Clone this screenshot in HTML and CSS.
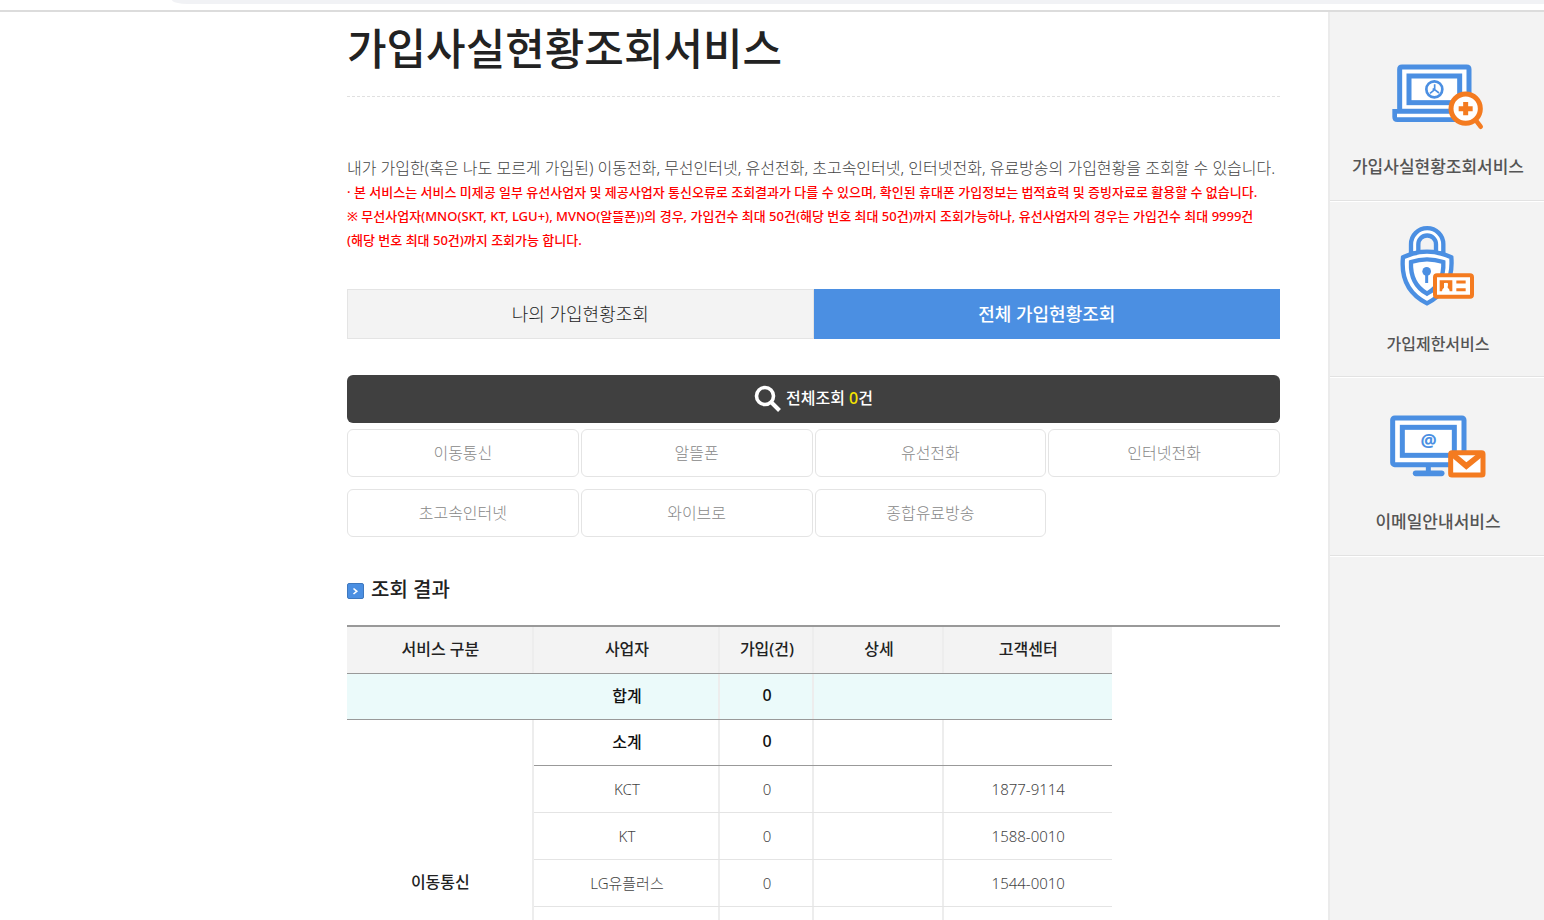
FILE: index.html
```html
<!DOCTYPE html>
<html lang="ko">
<head>
<meta charset="utf-8">
<title>가입사실현황조회서비스</title>
<link rel="stylesheet" href="styles.css">
</head>
<body>
<div class="app">
  <div class="browser-edge"><div class="address-edge"></div></div>
  <div class="page">
    <main class="main">
      <h1 class="title">가입사실현황조회서비스</h1>
      <section class="intro">
        <p class="lead">내가 가입한(혹은 나도 모르게 가입된) 이동전화, 무선인터넷, 유선전화, 초고속인터넷, 인터넷전화, 유료방송의 가입현황을 조회할 수 있습니다.</p>
        <p class="notice">· 본 서비스는 서비스 미제공 일부 유선사업자 및 제공사업자 통신오류로 조회결과가 다를 수 있으며, 확인된 휴대폰 가입정보는 법적효력 및 증빙자료로 활용할 수 없습니다.</p>
        <p class="notice">※ 무선사업자(MNO(SKT, KT, LGU+), MVNO(알뜰폰))의 경우, 가입건수 최대 50건(해당 번호 최대 50건)까지 조회가능하나, 유선사업자의 경우는 가입건수 최대 9999건<br>(해당 번호 최대 50건)까지 조회가능 합니다.</p>
      </section>
      <div class="tabs">
        <button class="tab" type="button">나의 가입현황조회</button>
        <button class="tab tab-active" type="button">전체 가입현황조회</button>
      </div>
      <button class="search" type="button">
        <svg class="search-icon" viewBox="0 0 28 28" aria-hidden="true"><circle cx="11" cy="11" r="8.500" fill="none" stroke="#fff" stroke-width="3.600"/><path d="M17 17l8.500 8.500" stroke="#fff" stroke-width="4"/></svg>
        <span class="search-label">전체조회 <span class="count">0</span>건</span>
      </button>
      <div class="filters">
        <button class="filter" type="button">이동통신</button>
        <button class="filter" type="button">알뜰폰</button>
        <button class="filter" type="button">유선전화</button>
        <button class="filter" type="button">인터넷전화</button>
        <button class="filter" type="button">초고속인터넷</button>
        <button class="filter" type="button">와이브로</button>
        <button class="filter" type="button">종합유료방송</button>
      </div>
      <h2 class="subtitle">
        <svg class="bullet" viewBox="0 0 17 17" aria-hidden="true"><rect x="0.5" y="0.5" width="16" height="15" rx="1.500" fill="#4b8fe2" stroke="#3f78be"/><path d="M6.500 5.500L9.800 8.300 6.500 11" fill="none" stroke="#fff" stroke-width="1.600"/></svg>
        조회 결과
      </h2>
      <div class="results">
        <table class="table">
          <colgroup><col class="col-kind"><col class="col-company"><col class="col-count"><col class="col-detail"><col class="col-phone"></colgroup>
          <thead>
            <tr><th>서비스 구분</th><th>사업자</th><th>가입(건)</th><th>상세</th><th>고객센터</th></tr>
          </thead>
          <tbody>
            <tr class="total"><td class="no-line"></td><td>합계</td><td>0</td><td class="no-line"></td><td></td></tr>
            <tr class="subtotal"><th class="group" rowspan="7" scope="rowgroup">이동통신</th><td>소계</td><td>0</td><td></td><td></td></tr>
            <tr><td>KCT</td><td>0</td><td></td><td>1877-9114</td></tr>
            <tr><td>KT</td><td>0</td><td></td><td>1588-0010</td></tr>
            <tr><td>LG유플러스</td><td>0</td><td></td><td>1544-0010</td></tr>
            <tr><td></td><td></td><td></td><td></td></tr>
            <tr><td></td><td></td><td></td><td></td></tr>
            <tr><td></td><td></td><td></td><td></td></tr>
          </tbody>
        </table>
      </div>
    </main>
    <aside class="side">
      <a class="service service-status" href="#">
        <svg class="service-icon" viewBox="210 65 288 210" aria-hidden="true">
          <g stroke="#4b8fe2" fill="#fff" stroke-width="15">
            <path d="M239 213V87q0-7 7-7h194q7 0 7 7v126z"/>
            <path d="M224 213h224v25H232q-8 0-8-8z" stroke-width="14"/>
            <rect x="267" y="107" width="152" height="80"/>
            <circle cx="343" cy="147" r="24" stroke-width="8"/>
            <path d="M344 132v16l-14 11M344 148l13 10M338 145l6 4" fill="none" stroke-width="5"/>
          </g>
          <path d="M466 238l16 21" stroke="#f47b20" stroke-width="14" stroke-linecap="round"/>
          <circle cx="437" cy="205" r="44" fill="#fff" stroke="#f47b20" stroke-width="15"/>
          <path d="M437 185v40M416 205h42" stroke="#f47b20" stroke-width="15"/>
        </svg>
        <span>가입사실현황조회서비스</span>
      </a>
      <a class="service service-limit" href="#">
        <svg class="service-icon" viewBox="210 70 288 255" aria-hidden="true">
          <g stroke="#4b8fe2" fill="#fff" stroke-width="13">
            <path d="M273 158v-27a48 48 0 0 1 97 0v27z"/>
            <path d="M295 156v-25a26 26 0 0 1 53 0v25z" fill="#f3f3f3"/>
            <path d="M249 170q36-17 72-17t73 17q8 96-73 138q-82-42-72-138z"/>
            <path d="M273 184q24-8 48-8t49 8q3 66-49 95q-51-29-48-95z"/>
            <circle cx="320" cy="212" r="13" fill="#4b8fe2" stroke="none"/>
            <path d="M320 215v32" stroke-width="9"/>
          </g>
          <rect x="345" y="224" width="111" height="64" rx="6" fill="#fff" stroke="#f47b20" stroke-width="12"/>
          <path d="M359 239h38v33h-8q0-8-6-11v-14h-11v14q-6 3-6 11h-7z" fill="#f47b20"/>
          <circle cx="378" cy="252" r="6" fill="#fff"/>
          <path d="M409 244h28M409 267h28" stroke="#f47b20" stroke-width="9"/>
        </svg>
        <span>가입제한서비스</span>
      </a>
      <a class="service service-mail" href="#">
        <svg class="service-icon" viewBox="207 95 288 225" aria-hidden="true">
          <g stroke="#4b8fe2" fill="#fff" stroke-width="15">
            <rect x="215" y="113" width="214" height="140" rx="6"/>
            <rect x="244" y="141" width="156" height="84"/>
            <path d="M322 258v16"/>
            <path d="M284 279h78" stroke-width="17" stroke-linecap="round"/>
          </g>
          <text x="323" y="199" text-anchor="middle" class="at-sign">@</text>
          <rect x="389" y="217" width="97" height="67" rx="4" fill="#fff" stroke="#f47b20" stroke-width="15"/>
          <path d="M392 220l44 37 46-37" fill="none" stroke="#f47b20" stroke-width="17"/>
        </svg>
        <span>이메일안내서비스</span>
      </a>
    </aside>
  </div>
</div>
</body>
</html>
```
FILE: styles.css
```css
* { box-sizing: border-box; }
body {
  margin: 0;
  background: #fff;
  color: #222;
  font-family: "Noto Sans", "Noto Sans CJK KR", sans-serif;
}
button {
  padding: 0 0 3px;
  border: 0;
  font: inherit;
  cursor: pointer;
}
.app {
  display: flex;
  flex-direction: column;
  height: 100vh;
  overflow: hidden;
}
.browser-edge {
  flex: none;
  height: 12px;
  padding-left: 172px;
  border-bottom: 2px solid #dcdcdc;
}
.address-edge {
  height: 4px;
  background: #f1f2f5;
  border-bottom-left-radius: 16px 4px;
}
.page {
  display: flex;
  flex: 1;
  min-height: 0;
}
.main {
  flex: 1;
  min-width: 0;
  padding: 0 48px 0 347px;
}
.title {
  margin: 0;
  padding: 7px 0 17px;
  border-bottom: 1px dashed #e0e0e0;
  font-size: 43px;
  line-height: 60px;
  font-weight: 500;
}
.intro {
  padding: 59px 0 37px;
}
.intro p {
  margin: 0;
  line-height: 24px;
  white-space: nowrap;
}
.lead {
  color: #444;
  font-size: 16px;
  font-weight: 300;
}
.notice {
  color: #f00;
  font-size: 13px;
  font-weight: 500;
}
.tabs {
  display: grid;
  grid-template-columns: 1fr 1fr;
  margin-bottom: 36px;
}
.tab {
  height: 50px;
  background: #f3f3f3;
  border: 1px solid #e4e4e4;
  color: #222;
  font-size: 18px;
  font-weight: 300;
}
.tab-active {
  background: #4b8fe2;
  border-color: #4b8fe2;
  color: #fff;
  font-weight: 500;
}
.search {
  display: flex;
  align-items: center;
  justify-content: center;
  gap: 4px;
  width: 100%;
  height: 48px;
  margin-bottom: 6px;
  padding: 0;
  border-radius: 6px;
  background: #404040;
  color: #fff;
  font-size: 16px;
  font-weight: 500;
}
.search-icon {
  width: 28px;
  height: 28px;
}
.search-label { padding-bottom: 4px; }
.count { color: #f5e400; }
.filters {
  display: grid;
  grid-template-columns: repeat(4, 1fr);
  gap: 12px 2px;
}
.filter {
  height: 48px;
  border: 1px solid #e4e4e4;
  border-radius: 6px;
  background: #fff;
  color: #888;
  font-size: 16px;
  font-weight: 300;
}
.subtitle {
  display: flex;
  align-items: center;
  gap: 7px;
  margin: 37px 0 20px;
  font-size: 20px;
  line-height: 31px;
  font-weight: 500;
}
.bullet {
  width: 17px;
  height: 17px;
  margin-top: 3px;
}
.results {
  border-top: 2px solid #999;
}
.table {
  width: 82%;
  table-layout: fixed;
  border-collapse: collapse;
  color: #444;
  font-size: 15px;
  font-weight: 300;
  text-align: center;
}
.col-kind, .col-company { width: 24.4%; }
.col-count { width: 12.2%; }
.col-detail { width: 17.1%; }
.col-phone { width: 21.9%; }
.table th, .table td {
  height: 47px;
  padding: 0;
  border-bottom: 1px solid #e4e4e4;
  background: linear-gradient(#ededed, #ededed) right / 2px 100% no-repeat;
}
.table th {
  padding-bottom: 4px;
  color: #222;
  font-size: 16px;
  font-weight: 500;
}
.table thead th {
  height: 46px;
  background-color: #f3f3f3;
  border-bottom-color: #999;
}
.table .total td, .table .subtotal td {
  height: 46px;
  padding-bottom: 3px;
  border-bottom-color: #999;
  color: #111;
  font-size: 16px;
  font-weight: 500;
}
.table .total td { background-color: #ebfafa; }
.table tr > :last-child, .table .total .no-line { background-image: none; }
.table .group { background-image: linear-gradient(#ededed, #ededed); }
.side {
  flex: none;
  width: 216px;
  border-left: 2px solid #ebebeb;
  background: #f3f3f3;
}
.service {
  display: flex;
  flex-direction: column;
  align-items: center;
  justify-content: flex-end;
  gap: 20px;
  padding: 0 0 18px 2px;
  border-bottom: 1px solid #e2e2e2;
  box-shadow: 0 1px #fff;
  color: #555;
  font-size: 17px;
  line-height: 30px;
  font-weight: 500;
  text-decoration: none;
}
.service-status { height: 189px; }
.service-limit {
  height: 176px;
  padding-bottom: 17px;
  font-size: 16px;
}
.service-mail { height: 179px; }
.service-icon { width: 96px; }
.at-sign {
  fill: #4b8fe2;
  font-size: 54px;
  font-weight: 700;
}
```
